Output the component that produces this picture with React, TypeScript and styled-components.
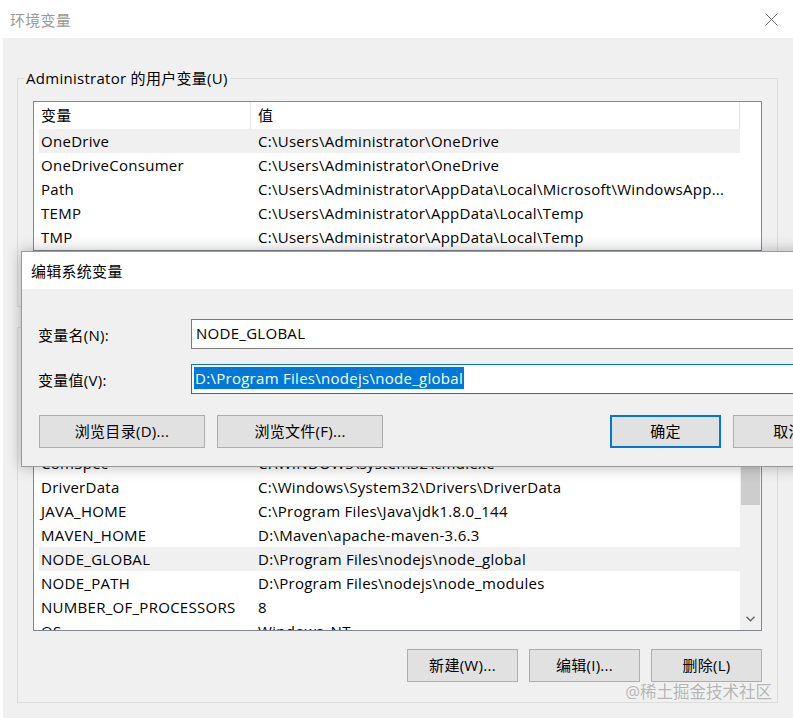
import React from "react";
import styled, { createGlobalStyle } from "styled-components";

const GlobalStyle = createGlobalStyle`
  html, body {
    margin: 0;
    padding: 0;
    background: #ffffff;
  }
  body {
    font-family: "Open Sans", "Noto Sans CJK SC", sans-serif;
    font-size: 15px;
    letter-spacing: 0.28px;
    color: #000000;
  }
`;

const Window = styled.div`
  position: relative;
  width: 793px;
  height: 718px;
  overflow: hidden;
  background: #ffffff;
`;

const TitleBar = styled.div`
  height: 38px;
  display: flex;
  align-items: center;
  justify-content: space-between;
  padding: 0 15px 0 10px;
  color: #999999;
`;

const Body = styled.div`
  margin-left: 3px;
  height: 680px;
  background: #f0f0f0;
  padding: 30px 15px 0 14px;
  box-sizing: border-box;
`;

const Group = styled.fieldset<{ $gap?: number }>`
  margin: ${(p) => p.$gap ?? 0}px 0 0 0;
  padding: 0 15px ${(p) => (p.$gap ? 20 : 12)}px 15px;
  border: 1px solid #dcdcdc;
  min-width: 0;
`;

const Legend = styled.legend`
  margin-left: -9px;
  padding: 0 2px;
  line-height: 20px;
  height: 20px;
`;

const List = styled.div<{ $height: number; $top: number }>`
  margin-top: ${(p) => p.$top}px;
  height: ${(p) => p.$height}px;
  box-sizing: border-box;
  border: 1px solid #828790;
  background: #ffffff;
  display: flex;
  overflow: hidden;
`;

const ListContent = styled.div`
  width: 706px;
  flex: none;
`;

const Gutter = styled.div`
  flex: 1;
`;

const ScrollBar = styled.div`
  flex: 1;
  background: #f0f0f0;
  display: flex;
  flex-direction: column;
  justify-content: space-between;
`;

const Thumb = styled.div`
  margin: 0 1px;
  height: 132px;
  margin-top: 21px;
  background: #cdcdcd;
`;

const ArrowBox = styled.div`
  height: 22px;
  display: flex;
  align-items: center;
  justify-content: center;
  color: #606060;
`;

const Header = styled.div`
  display: flex;
  height: 27px;
  align-items: center;
`;

const HeadCell = styled.div<{ $width?: number }>`
  width: ${(p) => (p.$width ? `${p.$width}px` : "auto")};
  flex: ${(p) => (p.$width ? "none" : 1)};
  height: 27px;
  line-height: 27px;
  padding-left: 7px;
  box-sizing: border-box;
  border-right: 1px solid #e5e5e5;
`;

const Row = styled.div<{ $selected?: boolean }>`
  display: flex;
  height: 24px;
  line-height: 24px;
  margin-left: 5px;
  background: ${(p) => (p.$selected ? "#f0f0f0" : "transparent")};
  white-space: nowrap;
`;

const NameCell = styled.div`
  width: 212px;
  flex: none;
  padding-left: 2px;
  box-sizing: border-box;
  overflow: hidden;
`;

const ValueCell = styled.div`
  flex: 1;
  padding-left: 7px;
  overflow: hidden;
`;

const ButtonRow = styled.div<{ $top: number }>`
  display: flex;
  justify-content: flex-end;
  gap: 11px;
  margin-top: ${(p) => p.$top}px;
`;

const Button = styled.button<{ $width: number; $primary?: boolean }>`
  width: ${(p) => p.$width}px;
  height: 33px;
  box-sizing: border-box;
  flex: none;
  background: #e1e1e1;
  border: ${(p) => (p.$primary ? "2px solid #0078d7" : "1px solid #adadad")};
  font-family: inherit;
  font-size: 15px;
  letter-spacing: inherit;
  line-height: 28px;
  color: #000000;
  padding: 0 0 1px;
  margin: 0;
`;

const Dialog = styled.div`
  position: absolute;
  left: 21px;
  top: 251px;
  width: 820px;
  height: 216px;
  box-sizing: border-box;
  border: 1px solid #9a9a9a;
  background: #f0f0f0;
  box-shadow: 0 0 14px rgba(0, 0, 0, 0.28);
`;

const DialogTitle = styled.div`
  height: 37px;
  background: #ffffff;
  display: flex;
  align-items: center;
  padding-left: 9px;
`;

const DialogBody = styled.div`
  padding: 30px 0 0 16px;
  display: flex;
  flex-direction: column;
`;

const Field = styled.div<{ $top?: number }>`
  display: flex;
  align-items: center;
  margin-top: ${(p) => p.$top ?? 0}px;
`;

const FieldLabel = styled.div`
  width: 153px;
  flex: none;
`;

const Input = styled.div<{ $focused?: boolean }>`
  width: 640px;
  height: 30px;
  box-sizing: border-box;
  background: #ffffff;
  border: 1px solid ${(p) => (p.$focused ? "#0078d7" : "#7a7a7a")};
  padding-left: ${(p) => (p.$focused ? 2 : 4)}px;
  padding-bottom: 3px;
  display: flex;
  align-items: center;
  white-space: nowrap;
`;

const Selected = styled.span`
  background: #0078d7;
  color: #ffffff;
  line-height: 22px;
  padding: 0 1px;
`;

const DialogButtons = styled.div`
  display: flex;
  margin-top: 21px;
  margin-left: 1px;
  gap: 12px;
`;

const Spacer = styled.div`
  width: 203px;
  flex: none;
`;

const Watermark = styled.div`
  position: absolute;
  right: 21px;
  top: 679px;
  font-size: 16.5px;
  letter-spacing: 0;
  color: #b4b4b4;
  text-shadow: 0 0 2px #ffffff;
`;

const userVars = [
  ["OneDrive", "C:\\Users\\Administrator\\OneDrive"],
  ["OneDriveConsumer", "C:\\Users\\Administrator\\OneDrive"],
  ["Path", "C:\\Users\\Administrator\\AppData\\Local\\Microsoft\\WindowsApp..."],
  ["TEMP", "C:\\Users\\Administrator\\AppData\\Local\\Temp"],
  ["TMP", "C:\\Users\\Administrator\\AppData\\Local\\Temp"],
];

const systemVars = [
  ["CATALINA_HOME", "D:\\apache-tomcat-9.0.37"],
  ["ChocolateyInstall", "C:\\ProgramData\\chocolatey"],
  ["CLASSPATH", ".;%JAVA_HOME%\\lib"],
  ["ComSpec", "C:\\WINDOWS\\system32\\cmd.exe"],
  ["DriverData", "C:\\Windows\\System32\\Drivers\\DriverData"],
  ["JAVA_HOME", "C:\\Program Files\\Java\\jdk1.8.0_144"],
  ["MAVEN_HOME", "D:\\Maven\\apache-maven-3.6.3"],
  ["NODE_GLOBAL", "D:\\Program Files\\nodejs\\node_global"],
  ["NODE_PATH", "D:\\Program Files\\nodejs\\node_modules"],
  ["NUMBER_OF_PROCESSORS", "8"],
  ["OS", "Windows_NT"],
];

const CloseIcon = () => (
  <svg width="13" height="13" viewBox="0 0 13 13">
    <path d="M0.5 0.5 L12.5 12.5 M12.5 0.5 L0.5 12.5" stroke="#6b6b6b" strokeWidth="1" fill="none" />
  </svg>
);

const ChevronDown = () => (
  <svg width="9" height="6" viewBox="0 0 9 6">
    <path d="M0.5 0.8 L4.5 4.8 L8.5 0.8" stroke="#606060" strokeWidth="1.3" fill="none" />
  </svg>
);

const VarHeader = () => (
  <Header>
    <HeadCell $width={217}>变量</HeadCell>
    <HeadCell>值</HeadCell>
  </Header>
);

export default function App() {
  return (
    <>
      <GlobalStyle />
      <Window>
        <TitleBar>
          <span>环境变量</span>
          <CloseIcon />
        </TitleBar>
        <Body>
          <Group>
            <Legend>Administrator 的用户变量(U)</Legend>
            <List $height={150} $top={13}>
              <ListContent>
                <VarHeader />
                {userVars.map(([name, value], i) => (
                  <Row key={name} $selected={i === 0}>
                    <NameCell>{name}</NameCell>
                    <ValueCell>{value}</ValueCell>
                  </Row>
                ))}
              </ListContent>
              <Gutter />
            </List>
            <ButtonRow $top={10}>
              <Button $width={111}>新建(N)...</Button>
              <Button $width={111}>编辑(E)...</Button>
              <Button $width={111}>删除(D)</Button>
            </ButtonRow>
          </Group>
          <Group $gap={10}>
            <Legend>系统变量(S)</Legend>
            <List $height={280} $top={14}>
              <ListContent>
                <VarHeader />
                {systemVars.map(([name, value]) => (
                  <Row key={name} $selected={name === "NODE_GLOBAL"}>
                    <NameCell>{name}</NameCell>
                    <ValueCell>{value}</ValueCell>
                  </Row>
                ))}
              </ListContent>
              <ScrollBar>
                <Thumb />
                <ArrowBox>
                  <ChevronDown />
                </ArrowBox>
              </ScrollBar>
            </List>
            <ButtonRow $top={18}>
              <Button $width={111}>新建(W)...</Button>
              <Button $width={111}>编辑(I)...</Button>
              <Button $width={111}>删除(L)</Button>
            </ButtonRow>
          </Group>
        </Body>

        <Dialog>
          <DialogTitle>编辑系统变量</DialogTitle>
          <DialogBody>
            <Field>
              <FieldLabel>变量名(N):</FieldLabel>
              <Input>NODE_GLOBAL</Input>
            </Field>
            <Field $top={15}>
              <FieldLabel>变量值(V):</FieldLabel>
              <Input $focused>
                <Selected>D:\Program Files\nodejs\node_global</Selected>
              </Input>
            </Field>
            <DialogButtons>
              <Button $width={166}>浏览目录(D)...</Button>
              <Button $width={166}>浏览文件(F)...</Button>
              <Spacer />
              <Button $width={111} $primary>
                确定
              </Button>
              <Button $width={111}>取消</Button>
            </DialogButtons>
          </DialogBody>
        </Dialog>

        <Watermark>@稀土掘金技术社区</Watermark>
      </Window>
    </>
  );
}
